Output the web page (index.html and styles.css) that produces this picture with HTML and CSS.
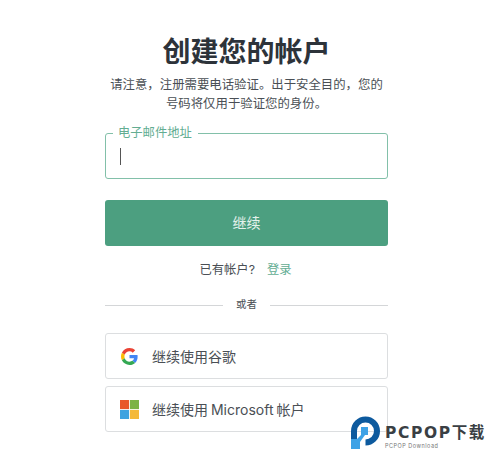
FILE: index.html
```html
<!DOCTYPE html>
<html lang="zh-CN">

<head>
  <meta charset="UTF-8">
  <meta name="viewport" content="width=device-width, initial-scale=1.0">
  <title>创建您的帐户</title>
  <link rel="stylesheet" href="styles.css">
</head>

<body>
  <div class="container">
    <h1 class="title">创建您的帐户</h1>
    <p class="intro">请注意，注册需要电话验证。出于安全目的，您的<br>号码将仅用于验证您的身份。</p>

    <div class="field">
      <span class="field-label">电子邮件地址</span>
      <span class="caret"></span>
    </div>

    <div class="btn-primary">继续</div>

    <p class="login">已有帐户?<a class="login-link">登录</a></p>

    <div class="divider"><span>或者</span></div>

    <div class="social">
      <svg class="social-icon" viewBox="0 0 48 48">
        <path fill="#ea4335" d="M24 9.500c3.500 0 6.700 1.200 9.200 3.600l6.900-6.900C35.900 2.400 30.500 0 24 0 14.600 0 6.500 5.400 2.600 13.200l8 6.200C12.500 13.600 17.800 9.500 24 9.500z"/>
        <path fill="#4285f4" d="M46.900 24.500c0-1.600-.1-3.100-.4-4.500H24v9h12.900c-.6 3-2.200 5.500-4.800 7.200l7.700 6c4.500-4.200 7.100-10.300 7.100-17.700z"/>
        <path fill="#fbbc05" d="M10.500 28.600c-.5-1.400-.8-3-.8-4.600s.3-3.200.8-4.600l-8-6.200C.9 16.500 0 20.100 0 24s.9 7.500 2.600 10.800l7.900-6.200z"/>
        <path fill="#34a853" d="M24 48c6.500 0 11.900-2.100 15.900-5.800l-7.700-6c-2.200 1.400-4.900 2.300-8.200 2.300-6.200 0-11.500-4.200-13.400-9.900l-8 6.200C6.500 42.600 14.600 48 24 48z"/>
      </svg>
      <span>继续使用谷歌</span>
    </div>

    <div class="social social-ms">
      <svg class="social-icon social-icon-ms" viewBox="0 0 18 18">
        <rect width="8.600" height="8.600" fill="#e8572a"/>
        <rect x="9.400" width="8.600" height="8.600" fill="#7db343"/>
        <rect y="9.400" width="8.600" height="8.600" fill="#3fa3e0"/>
        <rect x="9.400" y="9.400" width="8.600" height="8.600" fill="#f4b93a"/>
      </svg>
      <span>继续使用 Microsoft 帐户</span>
    </div>
  </div>

  <!-- watermark -->
  <div class="mark">
    <svg class="mark-logo" viewBox="0 0 29 35">
      <path fill="none" stroke="#0d5a9e" stroke-width="6" d="M3 25V16a11.500 11.500 0 1 1 11.500 11.500"/>
      <rect x="10" y="12" width="7" height="8" fill="#3ea2e6"/>
      <path fill="#3ea2e6" d="M6 24l5-5 3 1-5 7z"/>
      <rect y="24" width="9" height="10" fill="#3ea2e6"/>
    </svg>
    <div class="mark-text">
      <div class="mark-name">PCPOP下载</div>
      <div class="mark-sub">PCPOP Download</div>
    </div>
  </div>
</body>

</html>
```

FILE: styles.css
```css
* {
  padding: 0;
  margin: 0;
  box-sizing: border-box;
}

html,
body {
  height: 100%;
  overflow: hidden;
}

body {
  background: #fff;
  color: #2d333a;
  font-family: "Inter", "Noto Sans CJK SC", sans-serif;
}

.container {
  width: 283px;
  margin-left: 105px;
  padding-top: 34px;
}

.title {
  font-size: 28px;
  line-height: 37px;
  font-weight: 700;
  text-align: center;
  color: #2d333a;
}

.intro {
  margin: 4px -4px 0;
  font-size: 12.4px;
  line-height: 19px;
  text-align: center;
  color: #4a4f55;
}

.field {
  position: relative;
  display: flex;
  align-items: center;
  height: 46px;
  margin-top: 20px;
  padding-left: 14px;
  border: 1px solid #82c0a9;
  border-radius: 3px;
}

.field-label {
  position: absolute;
  top: -9px;
  left: 7px;
  padding: 0 6px 0 5px;
  background: #fff;
  font-size: 12.3px;
  line-height: 16px;
  color: #63ad92;
}

.caret {
  width: 1px;
  height: 17px;
  background: #555;
}

.btn-primary {
  height: 46px;
  margin-top: 21px;
  border-radius: 3px;
  background: #4c9f80;
  color: #e4f2ec;
  font-size: 14px;
  line-height: 46px;
  text-align: center;
}

.login {
  margin-top: 14px;
  padding-right: 2px;
  font-size: 12.3px;
  line-height: 20px;
  text-align: center;
  color: #4a4f55;
}

.login-link {
  margin-left: 12px;
  color: #63ad92;
}

.divider {
  display: flex;
  align-items: center;
  gap: 13px;
  margin-top: 15px;
  font-size: 10.500px;
  line-height: 20px;
  color: #4a4f55;
}

.divider::before,
.divider::after {
  content: "";
  flex: 1;
  height: 1px;
  background: #d4d6d8;
}

.social {
  display: flex;
  align-items: center;
  gap: 14px;
  height: 46px;
  margin-top: 7px;
  padding-left: 15px;
  border: 1px solid #dcdee0;
  border-radius: 3px;
  font-size: 14px;
  color: #4a4f55;
}

.social-ms {
  word-spacing: -1px;
}

.divider + .social {
  margin-top: 18px;
}

.social-icon {
  width: 17px;
  height: 17px;
  flex: none;
}

.social-icon-ms {
  width: 19px;
  height: 19px;
  margin-left: -1px;
  margin-right: -1px;
}

.mark {
  position: absolute;
  left: 351px;
  top: 415px;
  display: flex;
  gap: 5px;
}

.mark-logo {
  width: 29px;
  height: 35px;
}

.mark-text {
  padding-top: 10px;
}

.mark-name {
  font-family: "DejaVu Sans", "Noto Sans CJK SC", sans-serif;
  font-size: 15.500px;
  line-height: 16px;
  font-weight: 700;
  letter-spacing: 1.600px;
  color: #3a3f44;
  white-space: nowrap;
}

.mark-sub {
  margin-top: 2px;
  font-size: 5.500px;
  line-height: 7px;
  letter-spacing: 0.5px;
  color: #777;
}
```
